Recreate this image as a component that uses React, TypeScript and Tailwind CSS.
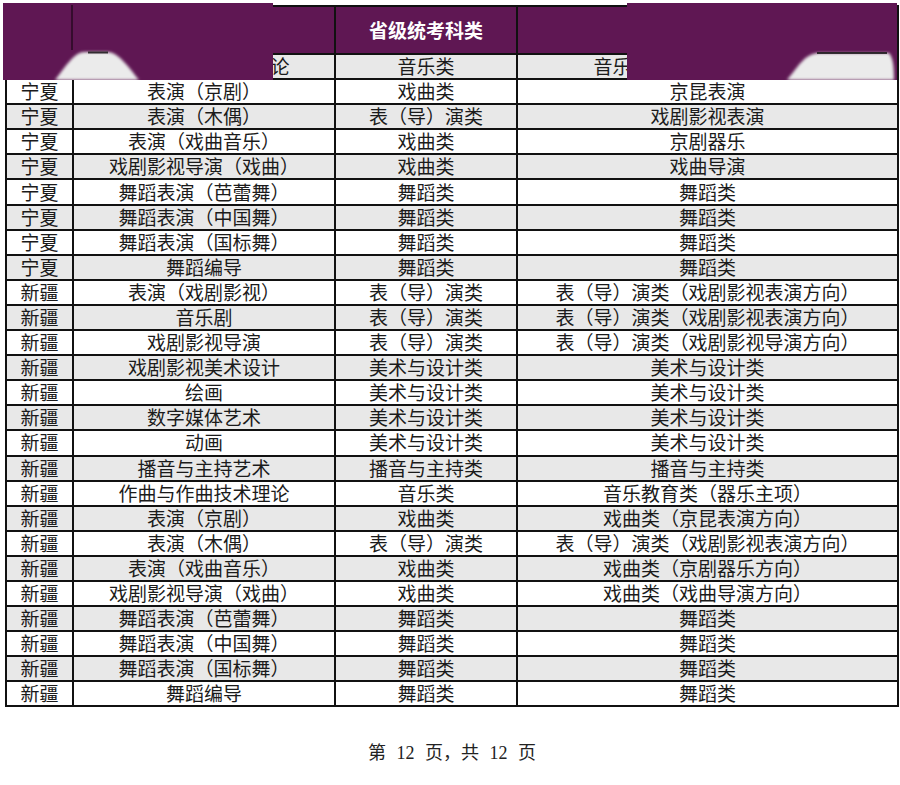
import React from "react";

type Row = [string, string, string, string];

const rows: Row[] = [
  ["宁夏", "作曲与作曲技术理论", "音乐类", "音乐教育类（作曲与理论）"],
  ["宁夏", "表演（京剧）", "戏曲类", "京昆表演"],
  ["宁夏", "表演（木偶）", "表（导）演类", "戏剧影视表演"],
  ["宁夏", "表演（戏曲音乐）", "戏曲类", "京剧器乐"],
  ["宁夏", "戏剧影视导演（戏曲）", "戏曲类", "戏曲导演"],
  ["宁夏", "舞蹈表演（芭蕾舞）", "舞蹈类", "舞蹈类"],
  ["宁夏", "舞蹈表演（中国舞）", "舞蹈类", "舞蹈类"],
  ["宁夏", "舞蹈表演（国标舞）", "舞蹈类", "舞蹈类"],
  ["宁夏", "舞蹈编导", "舞蹈类", "舞蹈类"],
  ["新疆", "表演（戏剧影视）", "表（导）演类", "表（导）演类（戏剧影视表演方向）"],
  ["新疆", "音乐剧", "表（导）演类", "表（导）演类（戏剧影视表演方向）"],
  ["新疆", "戏剧影视导演", "表（导）演类", "表（导）演类（戏剧影视导演方向）"],
  ["新疆", "戏剧影视美术设计", "美术与设计类", "美术与设计类"],
  ["新疆", "绘画", "美术与设计类", "美术与设计类"],
  ["新疆", "数字媒体艺术", "美术与设计类", "美术与设计类"],
  ["新疆", "动画", "美术与设计类", "美术与设计类"],
  ["新疆", "播音与主持艺术", "播音与主持类", "播音与主持类"],
  ["新疆", "作曲与作曲技术理论", "音乐类", "音乐教育类（器乐主项）"],
  ["新疆", "表演（京剧）", "戏曲类", "戏曲类（京昆表演方向）"],
  ["新疆", "表演（木偶）", "表（导）演类", "表（导）演类（戏剧影视表演方向）"],
  ["新疆", "表演（戏曲音乐）", "戏曲类", "戏曲类（京剧器乐方向）"],
  ["新疆", "戏剧影视导演（戏曲）", "戏曲类", "戏曲类（戏曲导演方向）"],
  ["新疆", "舞蹈表演（芭蕾舞）", "舞蹈类", "舞蹈类"],
  ["新疆", "舞蹈表演（中国舞）", "舞蹈类", "舞蹈类"],
  ["新疆", "舞蹈表演（国标舞）", "舞蹈类", "舞蹈类"],
  ["新疆", "舞蹈编导", "舞蹈类", "舞蹈类"],
];

const cjk = { fontFamily: '"Noto Sans CJK SC", "Noto Sans", sans-serif' };

// blurred patches laid over the header
function LeftPatch() {
  return (
    <svg width="270" height="77" viewBox="0 0 270 77" className="absolute left-[3px] top-[3px]">
      <defs>
        <filter id="soft-l" x="-20%" y="-20%" width="140%" height="140%">
          <feGaussianBlur stdDeviation="1.6" />
        </filter>
      </defs>
      <rect width="270" height="77" fill="#5f1753" />
      <rect x="68" y="2" width="2" height="45" fill="#2a0a24" opacity="0.8" />
      <path d="M52 77 C 64 62, 71 49, 82 49 L 104 49 C 115 49, 124 62, 136 77 Z" fill="#ebebeb" filter="url(#soft-l)" />
      <rect x="85" y="48.5" width="20" height="2" fill="#1a1a1a" opacity="0.85" />
    </svg>
  );
}

function RightPatch() {
  return (
    <svg width="270" height="77" viewBox="0 0 270 77" className="absolute left-[627px] top-[3px]">
      <defs>
        <filter id="soft-r" x="-20%" y="-20%" width="140%" height="140%">
          <feGaussianBlur stdDeviation="1.6" />
        </filter>
      </defs>
      <rect width="270" height="77" fill="#5f1753" />
      <path d="M160 77 C 171 64, 178 50, 192 50 L 262 50 C 266 55, 267 62, 267 77 Z" fill="#ebebeb" filter="url(#soft-r)" />
      <rect x="190" y="49" width="70" height="2" fill="#1a1a1a" opacity="0.85" />
    </svg>
  );
}

export default function App() {
  return (
    <div className="relative w-[900px] h-[785px] bg-white overflow-hidden text-[#1b1b1b]" style={cjk}>
      <div className="pt-[5px] pl-[5px]">
        <table className="table-fixed border-collapse w-[892px] text-[19px] leading-none">
          <colgroup>
            <col className="w-[67px]" />
            <col className="w-[262px]" />
            <col className="w-[182px]" />
            <col className="w-[381px]" />
          </colgroup>
          <thead>
            <tr className="h-[48px] bg-[#5f1753] text-white font-bold">
              <th className="border-2 border-[#111] pb-[2px]">省份</th>
              <th className="border-2 border-[#111] pb-[2px]">专业名称</th>
              <th className="border-2 border-[#111] pb-[2px]">省级统考科类</th>
              <th className="border-2 border-[#111] pb-[2px]">对应专业类别</th>
            </tr>
          </thead>
          <tbody>
            {rows.map((r, i) => (
              <tr key={i} className={`h-[25.1px] ${i % 2 === 0 ? "bg-[#e8e8e8]" : "bg-white"}`}>
                {r.map((c, j) => (
                  <td key={j} className="border-2 border-[#111] p-0 pb-[2px] text-center whitespace-nowrap">
                    {c}
                  </td>
                ))}
              </tr>
            ))}
          </tbody>
        </table>
      </div>

      <div
        className="mt-[33px] flex justify-center pl-[4px] text-[18px] text-[#222] [word-spacing:6px]"
        style={{ fontFamily: '"Liberation Serif", "Noto Sans CJK SC", serif' }}
      >
        第 12 页，共 12 页
      </div>

      <LeftPatch />
      <RightPatch />
    </div>
  );
}
